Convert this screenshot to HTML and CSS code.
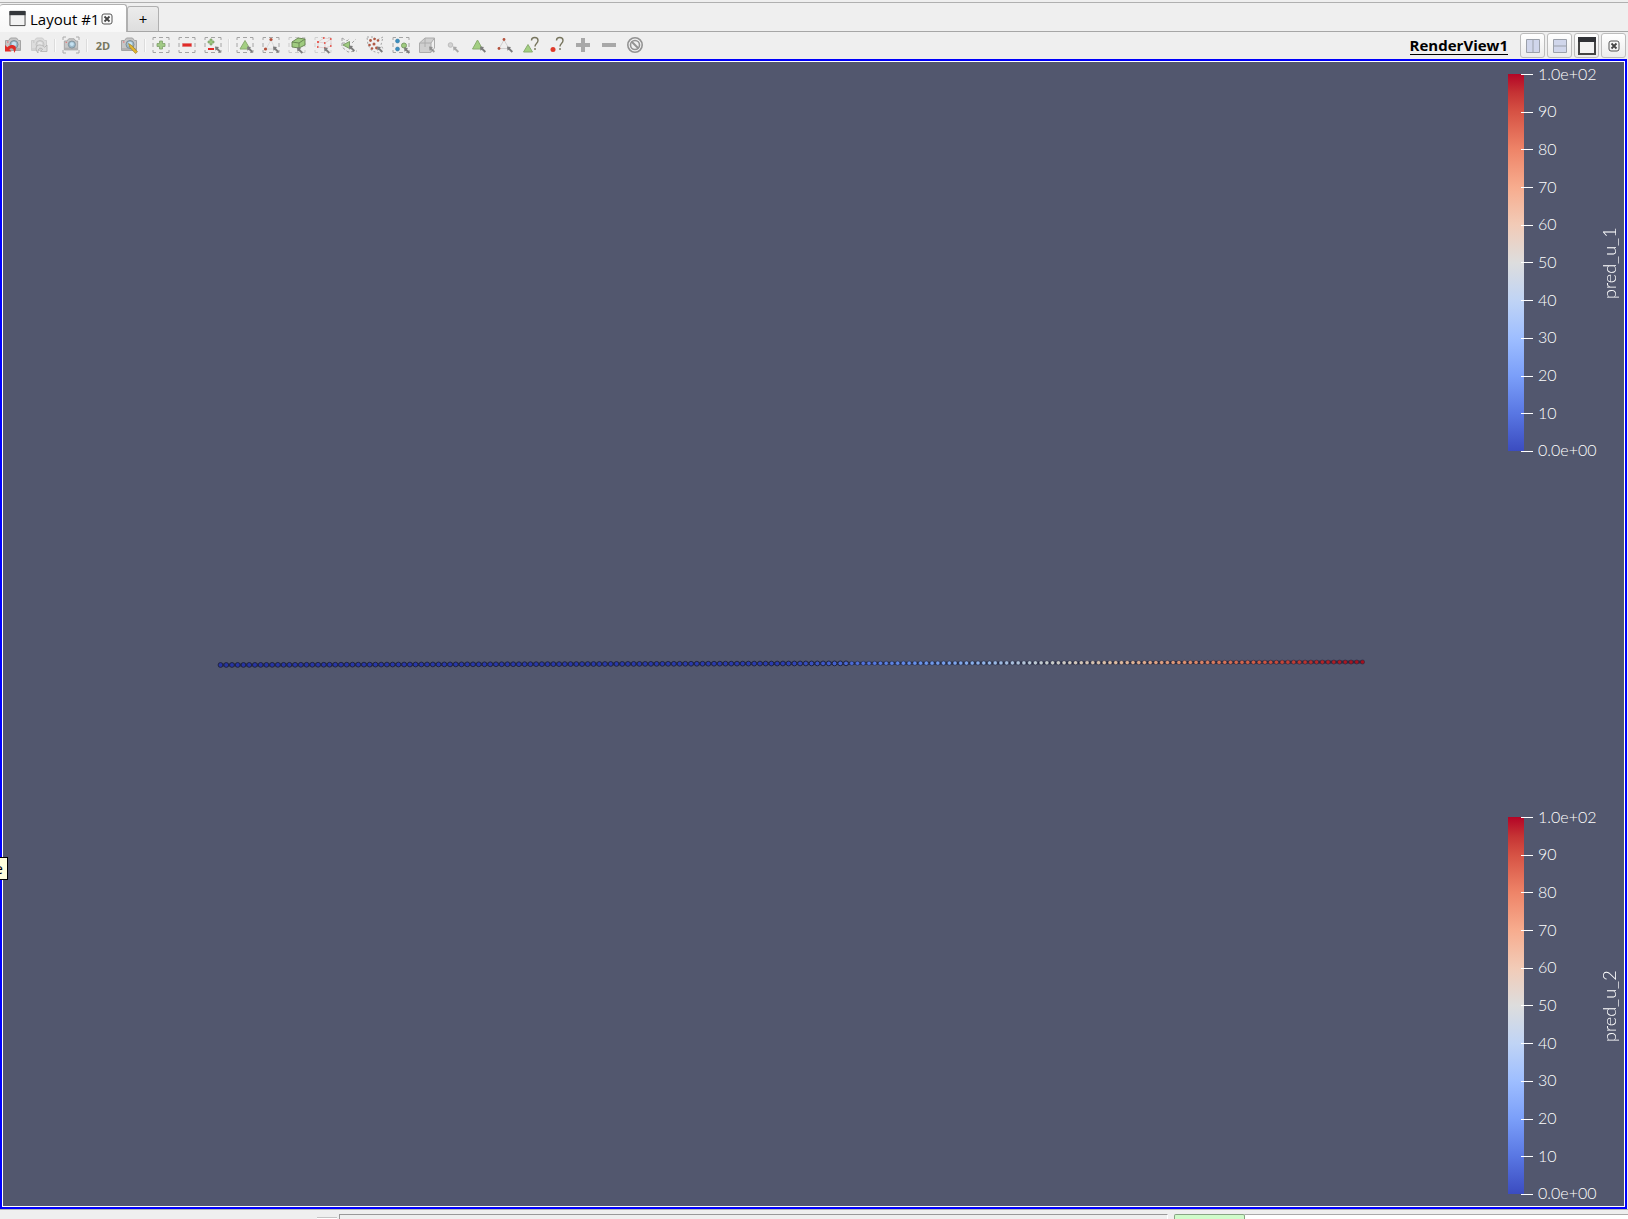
FILE: index.html
```html
<!DOCTYPE html>
<html lang="en">
<head>
<meta charset="utf-8">
<title>Layout #1</title>
<link rel="stylesheet" href="styles.css">
</head>
<body>
<svg class="defs" aria-hidden="true">
  <defs>
    <symbol id="frame" viewBox="0 0 18 18"><path d="M1 4V1.500H4M7 1.500h4M14 1.500h3V4M17 7v4M17 14v2.500h-3M11 16.500H7M4 16.500H1V14M1 11V7" fill="none" stroke="#a4a4a4"/></symbol>
    <symbol id="lens" viewBox="0 0 18 18"><path d="M11 10.500l4 .5-1 1.300 3 3-1.300 1.400-3-3-1.200 1z" fill="#7c7c7c"/></symbol>
    <symbol id="camera" viewBox="0 0 18 18"><path d="M1.500 4.500h3l2-2.500h6l2 2.500h2v10h-15z" fill="#c6c6c6" stroke="#a4a4a4"/><path d="M2 12h14v2H2z" fill="#b0b0b0"/><circle cx="10" cy="8.500" r="4" fill="#9bb9ca" stroke="#7f8f98"/><circle cx="10" cy="8" r="2.200" fill="#c6e2f1"/><path d="M3 6h1.500" stroke="#e66"/></symbol>
    <symbol id="close" viewBox="0 0 12 12"><rect x="1" y="1" width="10" height="10" rx="2" fill="none" stroke="#555"/><path d="M3.500 3.500l5 5M8.500 3.500l-5 5" stroke="#444" stroke-width="1.800"/></symbol>
    <symbol id="window" viewBox="0 0 18 18"><path d="M1 1.500h16v15H1z" fill="#f2f2f2" stroke="#444"/><path d="M.5 1h17v4.500H.5z" fill="#33363a"/></symbol>
  </defs>
</svg>

<header class="tabs">
  <div class="tab tab-active">
    <svg class="tab-icon"><use href="#window"/></svg>
    <span>Layout #1</span>
    <button class="plain" aria-label="Close layout"><svg class="close-icon"><use href="#close"/></svg></button>
  </div>
  <button class="tab tab-new" aria-label="New layout">+</button>
</header>

<div class="toolbar">
  <div class="tools">
    <button class="tool" aria-label="Camera undo"><svg viewBox="0 0 18 18"><use href="#camera"/><path d="M1 9v6.500h6.500L5.300 13.300c2-2.300 5.200-1.300 4.700 3.700 3.800-4.500 1.500-9.500-3.500-7.700-1.200.4-2.200 1-3.200 2z" fill="#e02c26"/></svg></button>
    <button class="tool" aria-label="Camera redo" disabled><svg viewBox="0 0 18 18"><g class="faded"><use href="#camera"/></g><path d="M17 9v6.500h-6.500l2.200-2.200c-2-2.300-5.200-1.300-4.700 3.700-3.800-4.500-1.500-9.500 3.500-7.700 1.200.4 2.200 1 3.200 2z" fill="#ddd" stroke="#b0b0b0" stroke-width=".8"/></svg></button>
    <span class="sep"></span>
    <button class="tool" aria-label="Capture screenshot"><svg viewBox="0 0 18 18"><use href="#camera" x="1" y="1" width="16" height="16"/><path d="M1 4V1h3M14 1h3v3M1 14v3h3M14 17h3v-3" fill="none" stroke="#aaa"/></svg></button>
    <span class="sep"></span>
    <button class="tool tool-2d">2D</button>
    <button class="tool" aria-label="Adjust camera"><svg viewBox="0 0 18 18"><use href="#camera"/><path d="M8.500 7.500l1 3.500 6 6.500 2-1.700-6-6.500z" fill="#e2b62f" stroke="#8e7226" stroke-width=".6"/></svg></button>
    <span class="sep"></span>
    <button class="tool" aria-label="Add selection"><svg viewBox="0 0 18 18"><use href="#frame"/><path d="M7.500 5h3v2.500H13v3h-2.500V13h-3v-2.500H5v-3h2.500z" fill="#a1ca85" stroke="#7f9f6b" stroke-width=".8"/></svg></button>
    <button class="tool" aria-label="Subtract selection"><svg viewBox="0 0 18 18"><use href="#frame"/><path d="M4.500 7.500h9v3h-9z" fill="#e12b28" stroke="#d66" stroke-width=".5"/></svg></button>
    <button class="tool" aria-label="Toggle selection"><svg viewBox="0 0 18 18"><use href="#frame"/><path d="M6 3h2v2h2v2H8v2H6V7H4V5h2z" fill="#9dc780" stroke="#71935c" stroke-width=".6"/><path d="M4 12h6v2H4z" fill="#e12b28"/><use href="#lens"/></svg></button>
    <span class="sep"></span>
    <button class="tool" aria-label="Select cells on"><svg viewBox="0 0 18 18"><use href="#frame"/><path d="M9 4.500l5 8.500H4z" fill="#a3cf82" stroke="#8aac70"/><use href="#lens"/></svg></button>
    <button class="tool" aria-label="Select points on"><svg viewBox="0 0 18 18"><use href="#frame"/><path d="M9 4L4 13h9z" fill="none" stroke="#d4d4d4" stroke-width=".8"/><g fill="#b4513c"><circle cx="9" cy="3.500" r="1.600"/><circle cx="3.500" cy="13" r="1.600"/></g><use href="#lens"/></svg></button>
    <button class="tool" aria-label="Select cells through"><svg viewBox="0 0 18 18"><use href="#frame" opacity=".5"/><path d="M4 6l6-4 7 1v6l-6 3-7-1z" fill="#9fcb7f" stroke="#64804f" stroke-width=".9"/><path d="M4 6l7 1 6-4M11 7v5" fill="none" stroke="#64804f" stroke-width=".9"/><use href="#lens" x="-2" y="1"/></svg></button>
    <button class="tool" aria-label="Select points through"><svg viewBox="0 0 18 18"><use href="#frame" opacity=".4"/><path d="M4 6l6-4 7 1v7l-6 2-7-1zM4 6l7 1 6-4M11 7v5" fill="none" stroke="#dcc4c4" stroke-width=".7"/><g fill="#e8625a"><path d="M3 5h2v2H3zM9 1h1.500v2H9zM16 2h1.500v2H16zM10 6h1.500v2H10zM3 10h1.500v2H3zM16 9h1.500v2H16zM10 11h1.500v1.500H10z"/></g><use href="#lens" x="-1" y="1"/></svg></button>
    <button class="tool" aria-label="Select cells polygon"><svg viewBox="0 0 18 18"><path d="M2 2l5 3 3-3M12 7l4-4M2 2v9l6 5 9-1M2 7h3" fill="none" stroke="#a4a4a4" stroke-dasharray="3 2"/><path d="M3 9l6.500-3.500v7z" fill="#9fcb7f" stroke="#7c9e68"/><use href="#lens" x="-2" y="-1"/></svg></button>
    <button class="tool" aria-label="Select points polygon"><svg viewBox="0 0 18 18"><path d="M1 1h7l3 3 6-3-2 8 2 4-4 4-7-2-4-6z" fill="none" stroke="#a4a4a4" stroke-dasharray="2 2"/><g fill="#b05844"><circle cx="4.500" cy="4.500" r="1.400"/><circle cx="8.500" cy="3" r="1.300"/><circle cx="12" cy="4.500" r="1.300"/><circle cx="3.500" cy="9" r="1.300"/><circle cx="8" cy="8" r="1.500"/><circle cx="6" cy="12.500" r="1.300"/><circle cx="10.500" cy="12" r="1.400"/></g><use href="#lens"/></svg></button>
    <button class="tool" aria-label="Select block"><svg viewBox="0 0 18 18"><use href="#frame"/><g fill="#3b8fc1" stroke="#2d7198" stroke-width=".5"><circle cx="5.500" cy="5" r="2"/><circle cx="5.500" cy="13" r="2"/></g><circle cx="12" cy="9.500" r="2.500" fill="#9fcb7f" stroke="#7c9e68"/><use href="#lens" x="1" y="1"/></svg></button>
    <button class="tool" aria-label="Select cube" disabled><svg viewBox="0 0 18 18"><path d="M1.500 7l5.500-5h9.500L13 7v9.500H1.500z" fill="#cfcfcf" stroke="#acacac"/><path d="M1.500 7H13M13 16l3.500-4V2M7 2v9" fill="none" stroke="#acacac"/><use href="#lens" opacity=".7"/></svg></button>
    <button class="tool" aria-label="Interactive select" disabled><svg viewBox="0 0 18 18"><circle cx="6.500" cy="9" r="2.300" fill="#d2d2d2" stroke="#bdbdbd"/><use href="#lens" opacity=".6" x="-2"/></svg></button>
    <button class="tool" aria-label="Interactive select cells"><svg viewBox="0 0 18 18"><path d="M7.500 4l5 9h-10z" fill="#a3cf82" stroke="#8aac70"/><use href="#lens" x="-1"/></svg></button>
    <button class="tool" aria-label="Interactive select points"><svg viewBox="0 0 18 18"><path d="M8 4L3 12.500h10z" fill="none" stroke="#d0d0d0"/><g fill="#b4513c"><circle cx="8" cy="3.500" r="1.400"/><circle cx="3" cy="12.500" r="1.400"/></g><use href="#lens"/></svg></button>
    <button class="tool" aria-label="Hover cells"><svg viewBox="0 0 18 18"><path d="M6 8.500l4.500 7.500h-9z" fill="#a3cf82" stroke="#8aac70"/><path d="M9.500 4.500c0-4 6.500-4 6.500 0 0 3-3 3-3 6M13 12v2" fill="none" stroke="#77755e" stroke-width="1.400"/></svg></button>
    <button class="tool" aria-label="Hover points"><svg viewBox="0 0 18 18"><circle cx="5" cy="13.500" r="2.500" fill="#df3b2b"/><path d="M8.500 4.500c0-4 6.500-4 6.500 0 0 3-3 3-3 6M12 12v2" fill="none" stroke="#77755e" stroke-width="1.400"/></svg></button>
    <button class="tool" aria-label="Grow selection" disabled><svg viewBox="0 0 18 18"><path d="M7 2h4v5h5v4h-5v5H7v-5H2V7h5z" fill="#a8a8a8"/></svg></button>
    <button class="tool" aria-label="Shrink selection" disabled><svg viewBox="0 0 18 18"><path d="M2 7h14v4H2z" fill="#a8a8a8"/></svg></button>
    <button class="tool" aria-label="Clear selection"><svg viewBox="0 0 18 18"><circle cx="9" cy="9" r="7.200" fill="none" stroke="#939393" stroke-width="1.600"/><circle cx="9" cy="9" r="4.500" fill="none" stroke="#939393" stroke-width="1.600"/><path d="M5.500 5.500l7 7" stroke="#939393" stroke-width="2"/></svg></button>
  </div>
  <div class="view-controls">
    <a class="view-name" href="#view">RenderView1</a>
    <button class="view-btn" aria-label="Split horizontal"><svg viewBox="0 0 18 18"><path d="M2.500 2.500h13v13h-13zM9 2.500v13" fill="#d0d6eb" stroke="#9ba0aa"/></svg></button>
    <button class="view-btn" aria-label="Split vertical"><svg viewBox="0 0 18 18"><path d="M2.500 2.500h13v13h-13zM2.500 9h13" fill="#d0d6eb" stroke="#9ba0aa"/></svg></button>
    <button class="view-btn" aria-label="Maximize"><svg viewBox="0 0 18 18"><path d="M1 1h16v16H1z" fill="#f2f2f2" stroke="#444" stroke-width="2"/><path d="M0 0h18v5H0z" fill="#303236"/></svg></button>
    <button class="view-btn" aria-label="Close view"><svg class="close-icon"><use href="#close"/></svg></button>
  </div>
</div>

<main class="view" id="view">
  <svg class="points" id="points" viewBox="0 0 1621 1144" preserveAspectRatio="xMidYMid meet" role="img" aria-label="Point data"></svg>
  <section class="legend">
    <div class="bar"></div>
    <ol class="ticks"><li>1.0e+02</li><li>90</li><li>80</li><li>70</li><li>60</li><li>50</li><li>40</li><li>30</li><li>20</li><li>10</li><li>0.0e+00</li></ol>
    <h2 class="legend-title">pred_u_1</h2>
  </section>
  <section class="legend">
    <div class="bar"></div>
    <ol class="ticks"><li>1.0e+02</li><li>90</li><li>80</li><li>70</li><li>60</li><li>50</li><li>40</li><li>30</li><li>20</li><li>10</li><li>0.0e+00</li></ol>
    <h2 class="legend-title">pred_u_2</h2>
  </section>
</main>

<footer class="status">
  <div class="status-button"></div>
  <div class="status-field"></div>
  <div class="status-progress"></div>
  <div class="status-rest"></div>
</footer>
<div class="tooltip">e</div>
<script src="points.js"></script>
</body>
</html>
```
FILE: styles.css
```css
* { box-sizing: border-box; }
body {
  margin: 0;
  min-height: 100vh;
  display: flex;
  flex-direction: column;
  position: relative;
  overflow: hidden;
  background: #efefef;
  color: #000;
  font: 15px "Open Sans", "Noto Sans", sans-serif;
}
button { font: inherit; color: inherit; padding: 0; border: 0; background: none; }
svg { display: block; flex: none; }
.defs { position: absolute; width: 0; height: 0; }
.faded { opacity: 0.45; filter: grayscale(1); }

.tabs {
  display: flex;
  align-items: flex-end;
  height: 32px;
  border-bottom: 1px solid #a6a6a6;
  background: linear-gradient(#efefef 2px, #b0b0b0 2px, #b0b0b0 3px, #efefef 3px);
}
.tab { border: 1px solid #b0b0b0; border-bottom: 0; border-radius: 3px 3px 0 0; }
.tab-active {
  display: flex;
  align-items: center;
  width: 127px;
  height: 28px;
  margin-bottom: -1px;
  padding-left: 9px;
  border-left: 0;
  background: linear-gradient(#fff, #f7f7f7);
  white-space: nowrap;
}
.tab-active span { width: 67px; margin-left: 4px; }
.tab-new { width: 32px; height: 25px; background: linear-gradient(#ececec, #dedede); line-height: 24px; }
.tab-icon { width: 17px; height: 17px; }
.close-icon { width: 12px; height: 12px; }
.plain { margin-left: 4px; }

.toolbar { display: flex; justify-content: space-between; height: 27px; }
.tools, .view-controls { display: flex; align-items: center; }
.tools { height: 26px; }
.tool { display: flex; align-items: center; justify-content: center; width: 26px; height: 26px; }
.tool svg { width: 18px; height: 18px; }
.tool-2d { color: #77775f; font-size: 11px; font-weight: 700; }
.sep { width: 2px; height: 13px; margin: 0 2px; background: #dcdcdc; border-right: 1px solid #fafafa; }
.view-controls { gap: 2px; padding-right: 2px; }
.view-name {
  margin-right: 10px;
  color: #000;
  font-size: 15px;
  font-weight: 700;
  line-height: 17px;
  text-decoration: none;
  border-bottom: 1px solid #000;
}
.view-btn {
  display: flex;
  align-items: center;
  justify-content: center;
  width: 25px;
  height: 25px;
  border: 1px solid #bcbcbc;
  border-radius: 3px;
  background: linear-gradient(#fff, #ececec);
}
.view-btn svg { width: 18px; height: 18px; }
.view-btn .close-icon { width: 12px; height: 12px; }

.view {
  position: relative;
  flex: 1;
  display: flex;
  flex-direction: column;
  align-items: flex-end;
  justify-content: space-between;
  gap: 24px;
  margin-right: 1px;
  padding: 13px 4px 12px 0;
  border: 2px solid #0000fb;
  outline: 1px solid #fff;
  outline-offset: -3px;
  background: #52576e;
  color: #fff;
  font-family: Lato, sans-serif;
}
.points { position: absolute; inset: 1px; width: calc(100% - 2px); height: calc(100% - 2px); }
.legend { display: flex; height: 378px; }
.bar {
  width: 16px;
  margin-bottom: 1px;
  background: linear-gradient(#b40426, #c53334 5%, #d65244 10%, #ee8468 20%, #f7ac8e 30%, #f2cbb7 40%, #dddddd 50%, #c0d4f5 60%, #9ebeff 70%, #7b9ff9 80%, #5977e3 90%, #3b4cc0);
}
.ticks {
  display: flex;
  flex-direction: column;
  justify-content: space-between;
  width: 76px;
  margin: -1px 0 1px -3px;
  padding: 0;
  list-style: none;
  font-size: 16px;
  font-weight: 300;
}
.ticks li { display: flex; align-items: center; gap: 5px; height: 1px; line-height: 20px; }
.ticks li::before { content: ""; width: 12px; height: 1px; margin-top: 2px; background: #fff; }
.legend-title {
  margin: 0;
  width: 24px;
  text-align: center;
  writing-mode: vertical-rl;
  transform: rotate(180deg);
  font-size: 18px;
  font-weight: 300;
  line-height: 24px;
}

.status { display: flex; align-items: flex-end; height: 10px; padding-left: 317px; border-top: 1px solid #b4b4b4; }
.status-button { width: 20px; height: 2px; border-top: 1px solid #c4c4c4; background: #fff; }
.status-field { flex: 1; height: 5px; margin-left: 2px; border: 1px solid #999; border-bottom: 0; border-right-color: #fff; }
.status-progress { width: 71px; height: 5px; margin-left: 6px; border: 1px solid #87a383; border-bottom: 0; border-radius: 2px 2px 0 0; background: #d0fbca; }
.status-rest { width: 383px; height: 5px; border-top: 1px solid #aaa; background: #fff; }
.tooltip {
  position: absolute;
  left: 0;
  top: 857px;
  display: flex;
  justify-content: flex-end;
  width: 8px;
  height: 23px;
  padding-right: 4px;
  border: 1px solid #000;
  border-left: 0;
  background: #ffffdc;
  overflow: hidden;
  font-size: 15px;
  line-height: 20px;
}
```
FILE: points.js
```js
// Sampled line of 200 points, coloured by the field value.
const stops = [
  [0, 38, 50, 160], [780, 42, 60, 175], [862, 80, 114, 220], [920, 105, 148, 235],
  [977, 140, 178, 235], [1048, 200, 205, 205], [1117, 222, 188, 160],
  [1182, 222, 146, 112], [1258, 210, 90, 65], [1330, 175, 30, 35], [1400, 150, 0, 25]
];
function colorAt(x) {
  const i = stops.findIndex(s => s[0] > x);
  const a = stops[i - 1], b = stops[i];
  const t = (x - a[0]) / (b[0] - a[0]);
  return "rgb(" + [1, 2, 3].map(k => Math.round(a[k] + (b[k] - a[k]) * t)).join(",") + ")";
}
const svg = document.getElementById("points");
const count = 200;
function add(tag, attrs) {
  const el = document.createElementNS("http://www.w3.org/2000/svg", tag);
  for (const key in attrs) el.setAttribute(key, attrs[key]);
  svg.appendChild(el);
}
add("line", { x1: 217, y1: 603, x2: 1360, y2: 600, stroke: "#1c2038", "stroke-width": 3, opacity: 0.75 });
for (let i = 0; i < count; i++) {
  const t = i / (count - 1);
  const x = 217.5 + 1142 * t;
  const y = 603 - 3 * t;
  add("circle", { cx: x, cy: y, r: t < 0.55 ? 2.4 : 2.1, fill: colorAt(x + 3), stroke: "#20243f", "stroke-width": t < 0.55 ? 1 : 0.5 });
}
```
